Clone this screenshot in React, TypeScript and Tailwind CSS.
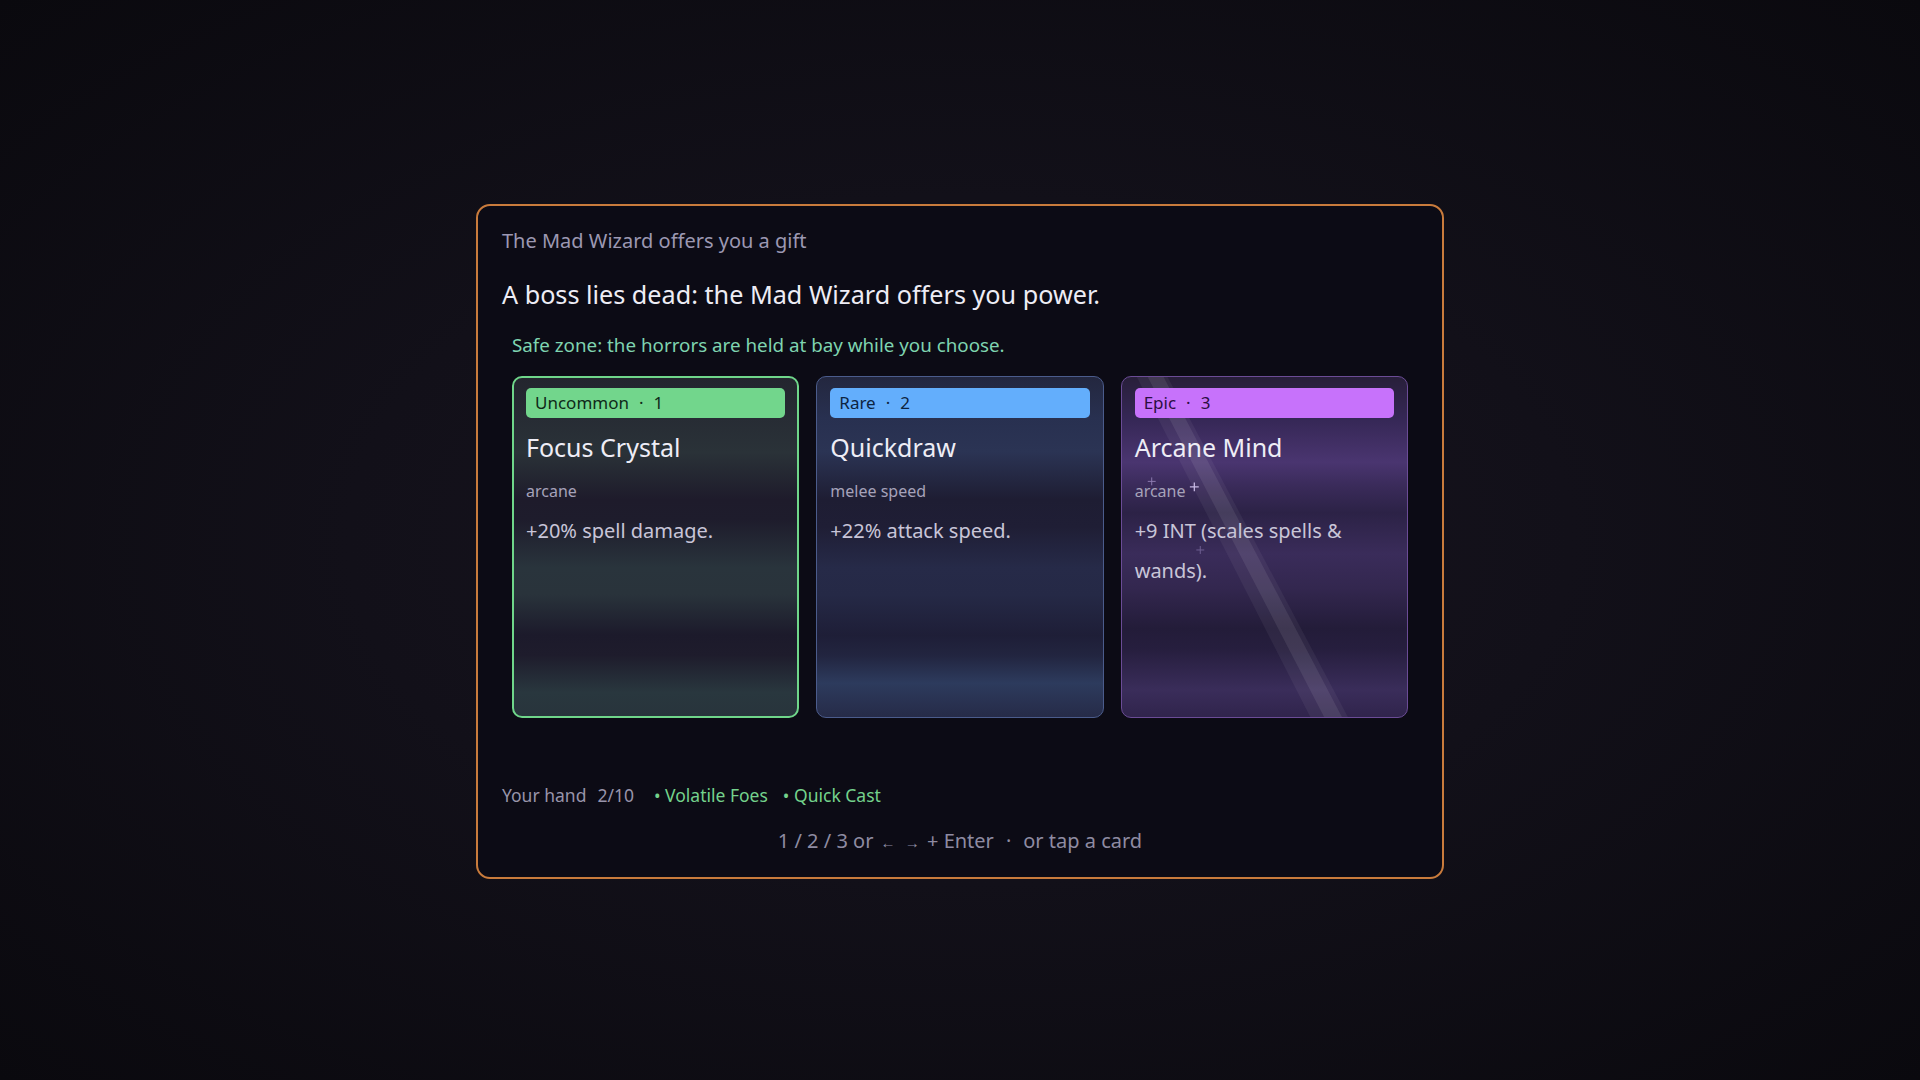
import React from 'react';

type Rarity = 'uncommon' | 'rare' | 'epic';

interface Offer {
  id: number;
  rarity: Rarity;
  label: string;
  name: string;
  tags: string;
  text: string;
}

const OFFERS: Offer[] = [
  { id: 1, rarity: 'uncommon', label: 'Uncommon', name: 'Focus Crystal', tags: 'arcane', text: '+20% spell damage.' },
  { id: 2, rarity: 'rare', label: 'Rare', name: 'Quickdraw', tags: 'melee speed', text: '+22% attack speed.' },
  { id: 3, rarity: 'epic', label: 'Epic', name: 'Arcane Mind', tags: 'arcane', text: '+9 INT (scales spells & wands).' },
];

// banded card backgrounds, one per rarity (selected card gets the thick border)
const cardStyles: Record<Rarity, string> = {
  uncommon:
    'border-2 border-[#6fd68a] px-[12px] pt-[10px] bg-[linear-gradient(180deg,#23252e_0%,#272c34_12%,#2a3238_22%,#1e1b2b_36%,#1e1c2c_42%,#29343c_56%,#29333b_64%,#1c1a2b_76%,#1e1c2c_82%,#29373e_93%,#28343c_100%)]',
  rare:
    'border border-[#4b5c8c] px-[13px] pt-[11px] bg-[linear-gradient(180deg,#23273f_0%,#283050_12%,#2b3454_22%,#1e1d33_36%,#1f1e35_44%,#262a48_56%,#252946_64%,#1e1e37_76%,#222540_82%,#2d3b5d_90%,#262b48_100%)]',
  epic:
    'border border-[#6b4c96] px-[13px] pt-[11px] bg-[linear-gradient(180deg,#281f3a_0%,#352755_12%,#4a3570_25%,#3a2b5a_32%,#2c2246_40%,#3a2c5a_52%,#33274f_62%,#231c39_74%,#261e3e_80%,#3a2d5a_92%,#30244c_100%)]',
};

const badgeStyles: Record<Rarity, string> = {
  uncommon: 'bg-[#72d68c] text-[#0f2a19]',
  rare: 'bg-[#63aefc] text-[#0d2440]',
  epic: 'bg-[#c772fb] text-[#2b0e42]',
};

// diagonal light streak and sparkles on the epic card
const Shine: React.FC = () => (
  <svg className="pointer-events-none absolute inset-0 h-full w-full" viewBox="0 0 288 342" preserveAspectRatio="none">
    <polygon points="15,0 46,0 228,342 190,342" fill="#ffffff" fillOpacity="0.05" />
    <polygon points="26,0 42,0 222,342 204,342" fill="#ffffff" fillOpacity="0.08" />
    <g stroke="#8c7aae" strokeWidth="1">
      <path d="M30 101v8M26 105h8" />
    </g>
    <g stroke="#c6b8e2" strokeWidth="1.3">
      <path d="M73 106v9M68.5 110.5h9" />
    </g>
    <g stroke="#6f5f92" strokeWidth="1">
      <path d="M79 170v8M75 174h8" />
    </g>
  </svg>
);

const OfferCard: React.FC<{ offer: Offer }> = ({ offer }) => (
  <div className={`relative h-[342px] overflow-hidden rounded-[10px] ${cardStyles[offer.rarity]}`}>
    {offer.rarity === 'epic' && <Shine />}
    <div className={`relative flex h-[30px] items-center rounded-[5px] px-[9px] text-[17px] ${badgeStyles[offer.rarity]}`}>
      {offer.label}
      <span className="mx-[10px]">·</span>
      {offer.id}
    </div>
    <div className="relative mt-[13px] text-[25px] leading-[32px] text-[#eeedf6]">{offer.name}</div>
    <div className="relative mt-[16px] text-[16px] leading-[24px] text-[#a6a2ba]">{offer.tags}</div>
    <div className="relative mt-[8px] text-[20px] leading-[40px] text-[#c8c5d8]">{offer.text}</div>
  </div>
);

export default function App() {
  return (
    <div
      className="flex min-h-screen w-full items-center justify-center bg-[radial-gradient(ellipse_at_center,#18141f_0%,#121019_45%,#0a090e_100%)]"
      style={{ fontFamily: '"Noto Sans", "Open Sans", sans-serif' }}
    >
      <div className="mt-[2px] flex h-[675px] w-[968px] flex-col rounded-[14px] border-2 border-[#c97b3c] bg-[#0c0b15] px-[24px] pt-[21px]">
        <div className="text-[20px] leading-[28px] text-[#9c98b2]">The Mad Wizard offers you a gift</div>
        <div className="mt-[22px] text-[25.2px] leading-[34px] text-[#eeedf5]">
          A boss lies dead: the Mad Wizard offers you power.
        </div>
        <div className="mt-[21px] px-[10px] text-[18.8px] leading-[26px] text-[#7fd4b0]">
          Safe zone: the horrors are held at bay while you choose.
        </div>

        <div className="mt-[18px] grid grid-cols-3 gap-[17px] px-[10px]">
          {OFFERS.map(o => (
            <OfferCard key={o.id} offer={o} />
          ))}
        </div>

        <div className="mt-[64px] flex items-center text-[17.5px] leading-[26px]">
          <span className="text-[#9894aa]">Your hand</span>
          <span className="ml-[11px] text-[#9894aa]">2/10</span>
          <span className="ml-[20px] text-[#74d28c]">• Volatile Foes</span>
          <span className="ml-[15px] text-[#74d28c]">• Quick Cast</span>
        </div>

        <div className="mt-[19px] text-center text-[20px] leading-[28px] text-[#8f8ba2]">
          1 / 2 / 3 or <span className="mx-[2px] text-[15px]">←</span> <span className="mx-[2px] text-[15px]">→</span> + Enter
          <span className="mx-[12px]">·</span>or tap a card
        </div>
      </div>
    </div>
  );
}
